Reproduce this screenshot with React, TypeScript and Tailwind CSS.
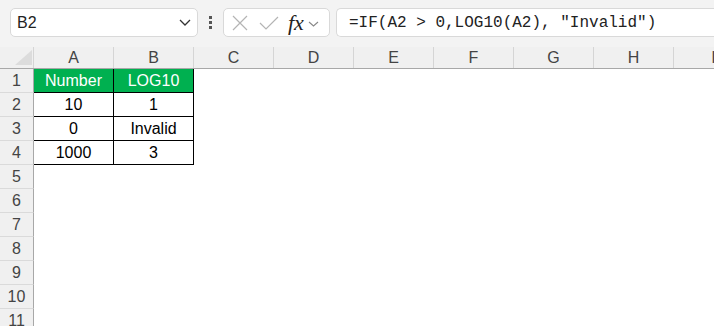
const columns = ["A", "B", "C", "D", "E", "F", "G", "H", "I"];

const tableRows = [
	["Number", "LOG10"],
	["10", "1"],
	["0", "Invalid"],
	["1000", "3"],
];

const rowNumbers = [1, 2, 3, 4, 5, 6, 7, 8, 9, 10, 11];

const App = () => {
	return (
		<div className="h-[326px] w-[714px] overflow-hidden bg-white font-['Liberation_Sans',Arial,sans-serif] text-[#222]">
			{/* Formula bar */}
			<div className="flex h-[47px] items-start bg-[#f3f3f3] pl-[10px] pt-[8px]">
				<div className="flex h-[29px] w-[188px] items-center justify-between rounded-[5px] border border-[#d9d9d9] bg-white pl-[6px] pr-[6px]">
					<span className="text-[16px] text-[#222]">B2</span>
					<svg width="12" height="7" viewBox="0 0 12 7" fill="none">
						<path d="M1 1l5 5 5-5" stroke="#333" strokeWidth="1.3" />
					</svg>
				</div>

				<div className="flex h-[29px] w-[25px] flex-col items-center justify-center gap-[2px]">
					<span className="h-[3px] w-[3px] bg-[#555]" />
					<span className="h-[3px] w-[3px] bg-[#555]" />
					<span className="h-[3px] w-[3px] bg-[#555]" />
				</div>

				<div className="flex h-[29px] w-[107px] items-center rounded-[5px] border border-[#d9d9d9] bg-white pl-[8px]">
					<svg width="16" height="16" viewBox="0 0 16 16" fill="none">
						<path d="M1 1l14 14M15 1L1 15" stroke="#b4b4b4" strokeWidth="1.2" />
					</svg>
					<svg className="ml-[11px]" width="20" height="14" viewBox="0 0 20 14" fill="none">
						<path d="M1 7l6 6L19 1" stroke="#b4b4b4" strokeWidth="1.2" />
					</svg>
					<span className="ml-[9px] font-['Liberation_Serif',serif] text-[22px] italic leading-none text-[#222]">
						fx
					</span>
					<svg className="ml-[4px] mt-[2px]" width="11" height="6" viewBox="0 0 11 6" fill="none">
						<path d="M1 1l4.5 4 4.5-4" stroke="#888" strokeWidth="1.1" />
					</svg>
				</div>

				<div className="ml-[6px] flex h-[29px] flex-1 items-center rounded-l-[5px] border border-r-0 border-[#d9d9d9] bg-white pl-[12px]">
					<span className="whitespace-pre font-['Liberation_Mono',monospace] text-[16px] text-[#222]">
						=IF(A2 &gt; 0,LOG10(A2), "Invalid")
					</span>
				</div>
			</div>

			{/* Column headers */}
			<div className="flex h-[22px] border-b border-[#a8a8a8] bg-[#f0f0f0]">
				<div className="relative w-[34px] shrink-0 border-r border-[#d5d5d5]">
					<svg className="absolute left-[15px] top-[3px]" width="17" height="15" viewBox="0 0 17 15">
						<path d="M17 0V15H0Z" fill="#dcdcdc" />
					</svg>
				</div>
				{columns.map((col) => (
					<div
						key={col}
						className="flex w-[80px] shrink-0 items-center justify-center border-r border-[#d5d5d5] text-[16px] text-[#444]"
					>
						{col}
					</div>
				))}
			</div>

			{/* Grid body */}
			{rowNumbers.map((n, r) => (
				<div key={n} className="flex h-[24px]">
					<div className="flex w-[34px] shrink-0 items-center justify-center border-r border-b border-r-[#a8a8a8] border-b-[#dadada] bg-[#f0f0f0] text-[16px] text-[#444]">
						{n}
					</div>
					{r < tableRows.length &&
						tableRows[r].map((value, c) => (
							<div
								key={c}
								className={`flex w-[80px] shrink-0 items-center justify-center border-r border-b border-black text-[16px] ${
									r === 0 ? "bg-[#00b050] text-white" : "bg-white text-black"
								}`}
							>
								{value}
							</div>
						))}
				</div>
			))}
		</div>
	);
};

export default App;
